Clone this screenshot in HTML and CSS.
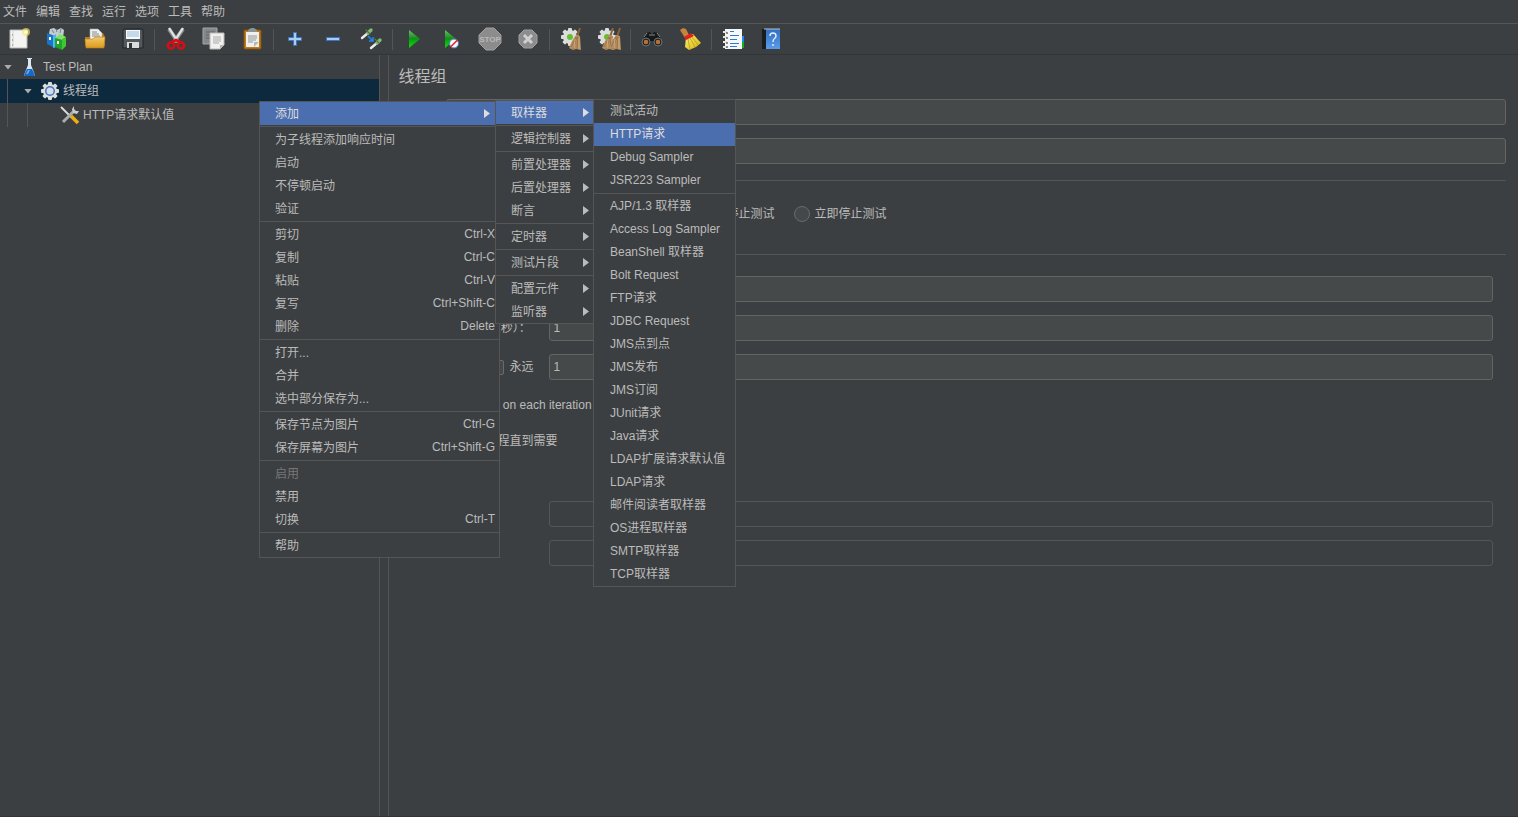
FILE: index.html
```
<!DOCTYPE html>
<html lang="zh-CN">
<head>
<meta charset="utf-8">
<title>Test Plan</title>
<link rel="stylesheet" href="styles.css">
</head>
<body>
<svg class="defs" aria-hidden="true">
  <defs>
    <linearGradient id="green" x1="0" y1="0" x2="0" y2="1"><stop offset="0" stop-color="#6fbf68"/><stop offset=".5" stop-color="#0f8a18"/><stop offset=".55" stop-color="#05a80c"/><stop offset="1" stop-color="#0fd813"/></linearGradient>
    <linearGradient id="folder" x1="0" y1="0" x2="0" y2="1"><stop offset="0" stop-color="#f3ca68"/><stop offset="1" stop-color="#d99a1c"/></linearGradient>
    <linearGradient id="book" x1="0" y1="0" x2="0" y2="1"><stop offset="0" stop-color="#2f6fc4"/><stop offset="1" stop-color="#5b9bea"/></linearGradient>
    <linearGradient id="broom" x1="0" y1="0" x2="1" y2="1"><stop offset="0" stop-color="#fff27a"/><stop offset="1" stop-color="#d3b00a"/></linearGradient>
    <g id="gear"><g fill="#dcdedc"><circle cx="9" cy="10" r="7"/><g id="teeth"><rect x="7" y="1" width="4" height="18" rx="1"/><rect x="0" y="8" width="18" height="4" rx="1"/></g><use href="#teeth" transform="rotate(45 9 10)"/></g></g>
    <g id="besom"><path d="M21 1l-3 9" stroke="#8a6239" stroke-width="2"/><path d="M17 8l4 1 1 14-5-1-3 1-4-2 3-7z" fill="#b58d60"/><path d="M18 10l-4 12M19 10l-1 12M17 10l-5 10" stroke="#8d6841" stroke-width=".7"/><path d="M20 11v11M16 12l-1 9" stroke="#dfbd8b" stroke-width=".7"/></g>
  </defs>
</svg>

<nav class="menubar" aria-label="主菜单">
  <button>文件</button><button>编辑</button><button>查找</button><button>运行</button><button>选项</button><button>工具</button><button>帮助</button>
</nav>

<div class="toolbar" role="toolbar">
  <button aria-label="新建"><svg viewBox="0 0 24 24"><path d="M3 3h17v18H3z" fill="#f4f4f2" stroke="#b7b7b2"/><path d="M6 4v16" stroke="#d4d4d4"/><path d="M5 8h1M5 13h1M5 18h1" stroke="#777"/><circle cx="19" cy="5" r="4" fill="#f7e96c" opacity=".65"/><circle cx="19" cy="5" r="2" fill="#fffcc4"/></svg></button>
  <button aria-label="模板"><svg viewBox="0 0 24 24"><path d="M4 6l1-4 4-1 3 2 4-2 3 2-1 8H6z" fill="#c3ccd0"/><path d="M7 3l2 3M11 2l1 3M16 2l-1 4" stroke="#768087"/><path d="M2 6l8 3v12l-8-4z" fill="#1676c9"/><path d="M8 9l3-2v13l-3 1z" fill="#50b5ea"/><path d="M10 11l7 2v10l-7-3z" fill="#1fa42c"/><path d="M10 11l5-4 6 3-4 3z" fill="#79e463"/><path d="M17 13l4-3v9l-4 4z" fill="#3fc82f"/><path d="M5 10v3M13 14v3" stroke="#fff" stroke-width="2"/></svg></button>
  <button aria-label="打开"><svg viewBox="0 0 24 24"><path d="M2 10h5l2-4h11l2 4v9H2z" fill="#b87b16"/><path d="M7 2h8l4 4v8H7z" fill="#f1f1ef" stroke="#aaa" stroke-width=".6"/><path d="M9 5h5M9 7h7M9 9h8" stroke="#888"/><path d="M2 12h8l2-2h10l-1 11H3z" fill="url(#folder)" stroke="#b27b1e" stroke-width=".6"/></svg></button>
  <button aria-label="保存"><svg viewBox="0 0 24 24"><path d="M3 2h18l1 1v18H2V3z" fill="#53585b" stroke="#202325"/><path d="M5 3h14v9H5z" fill="#f5f9fc"/><path d="M6 5h12M6 7h12M6 9h12" stroke="#95bbd4"/><path d="M6 15h12v6H6z" fill="#d9dcdc"/><path d="M8 16h3v5H8z" fill="#303435"/></svg></button>
  <span class="bar"></span>
  <button aria-label="剪切"><svg viewBox="0 0 24 24"><path d="M5 2l9 13M19 2l-9 13" stroke="#85898a" stroke-width="4"/><path d="M5 1l9 14M19 1l-9 14" stroke="#e3e6e6" stroke-width="2.3"/><g fill="none" stroke="#d90c13" stroke-width="2.6"><ellipse cx="7" cy="18.500" rx="3.200" ry="3"/><ellipse cx="17" cy="18.500" rx="3.200" ry="3"/><path d="M8 15l4-2 4 2"/></g></svg></button>
  <button aria-label="复制"><svg viewBox="0 0 24 24"><path d="M1 1h14v16H1z" fill="#85888a" stroke="#a4a6a7"/><path d="M4 5h9M4 8h9M4 11h9" stroke="#606466"/><path d="M8 6h14v12l-4 4H8z" fill="#f0f0ee" stroke="#b9b9b5"/><path d="M11 10h8M11 12h8M11 14h8M11 16h6" stroke="#aaa"/><path d="M18 22v-4h4z" fill="#b4b4b0"/></svg></button>
  <button aria-label="粘贴"><svg viewBox="0 0 24 24"><rect x="4" y="3" width="17" height="19" rx="1" fill="#c17a1a" stroke="#80500f"/><path d="M6 5h13v15H6z" fill="#efefed"/><path d="M8 5V3l3-2h3l3 2v2z" fill="#8d9293"/><path d="M8 9h9M8 11h9M8 13h8M8 15h5" stroke="#929799"/><path d="M19 15l-5 5v-5z" fill="#b5b8b8"/></svg></button>
  <span class="bar"></span>
  <button aria-label="展开"><svg viewBox="0 0 24 24"><path d="M10.500 5.500h3v5h5v3h-5v5h-3v-5h-5v-3h5z" fill="#a9cdf2" stroke="#3b76c0"/></svg></button>
  <button aria-label="折叠"><svg viewBox="0 0 24 24"><path d="M5.500 10.500h13v3h-13z" fill="#a9cdf2" stroke="#3b76c0"/></svg></button>
  <button aria-label="切换"><svg viewBox="0 0 24 24"><g stroke-linecap="round"><path d="M3 11l6-5M12 21l6-5" stroke="#ececeb" stroke-width="2.400"/><path d="M9 6l3-3M18 16l3-3" stroke="#86b875" stroke-width="3.400"/><path d="M7 3l4 4M16 12l4 4" stroke="#4f7a45" stroke-width="1.200"/></g><path d="M9 9l5 5M14 10v4h-4" fill="none" stroke="#2686ed" stroke-width="1.500"/></svg></button>
  <span class="bar"></span>
  <button aria-label="启动"><svg viewBox="0 0 24 24"><path d="M7 3l11 9-11 9z" fill="url(#green)"/></svg></button>
  <button aria-label="不停顿启动"><svg viewBox="0 0 24 24"><path d="M5 3l11 9-11 9z" fill="url(#green)"/><circle cx="14" cy="16.500" r="4.500" fill="#f5f7fb" stroke="#427dba"/><path d="M10.500 20l7-7" stroke="#e5222b" stroke-width="1.600"/></svg></button>
  <button disabled aria-label="停止"><svg viewBox="0 0 24 24"><path d="M8 1h8l7 7v8l-7 7H8l-7-7V8z" fill="#8c8c8c" stroke="#a0a0a0"/><text class="stop-word" x="12" y="15">STOP</text></svg></button>
  <button disabled aria-label="关闭"><svg viewBox="0 0 24 24"><path d="M8 3h8l5 5v8l-5 5H8l-5-5V8z" fill="#8c8c8c" stroke="#a0a0a0"/><path d="M8 8l8 8M16 8l-8 8" stroke="#d0d0d0" stroke-width="3"/></svg></button>
  <span class="bar"></span>
  <button aria-label="清除"><svg viewBox="0 0 24 24"><g transform="translate(2 0)"><use href="#gear"/><circle cx="9" cy="10" r="3" fill="#68bd31"/></g><use href="#besom"/></svg></button>
  <button aria-label="清除全部"><svg viewBox="0 0 24 24"><g transform="translate(1 0)"><use href="#gear"/><circle cx="9" cy="10" r="3" fill="#68bd31"/></g><use href="#besom" transform="translate(-5 0)"/><use href="#besom" transform="translate(2 0)"/></svg></button>
  <span class="bar"></span>
  <button aria-label="查找"><svg viewBox="0 0 24 24"><path d="M2 14L6 6l4-1 2 3 2-3 4 1 4 8-4 4-5-4h-2l-5 4z" fill="#17191b"/><path d="M4 10l3-4M20 10l-3-4M9 8h6" stroke="#848b8e"/><circle cx="6" cy="15" r="4" fill="#222" stroke="#6c7376"/><circle cx="18" cy="15" r="4" fill="#222" stroke="#6c7376"/><circle cx="6" cy="15" r="2.300" fill="#b77137"/><circle cx="18" cy="15" r="2.300" fill="#b77137"/></svg></button>
  <button aria-label="重置查找"><svg viewBox="0 0 24 24"><path d="M2 3l3-2 3 1 3 6-4 3z" fill="#c6843b"/><path d="M8 10l7-3 8 9-5 4-7 3-4-3z" fill="url(#broom)"/><path d="M10 12l2 10M12 11l5 9M14 10l6 8" stroke="#b99c10" stroke-width=".8"/><path d="M6 10l7-4 3 3-8 4z" fill="#dc211e"/></svg></button>
  <span class="bar"></span>
  <button aria-label="函数助手"><svg viewBox="0 0 24 24"><path d="M19 9h4v6h-4z" fill="#1690ed"/><path d="M19 15h4v6h-4z" fill="#18ad20"/><path d="M4 2h17v20H4z" fill="#f7f7f7"/><path d="M2 5h4M2 10h4M2 15h4M2 20h4" stroke="#e5e5e5" stroke-width="2"/><path d="M5 6h2M5 11h2M5 16h2M5 20h2" stroke="#222"/><path d="M9 4.500h4M9 8.500h9M9 12.500h7M9 16.500h9M9 19.500h7" stroke="#287bd1"/></svg></button>
  <button aria-label="帮助"><svg viewBox="0 0 24 24"><path d="M3 2h18v20H3z" fill="#1b1c1e"/><path d="M7 2h14v20H7z" fill="url(#book)"/><path d="M5 2h16" stroke="#b9c2cc"/><path d="M11 9q0-3 3-3t3 3q0 1.500-1.500 2.500T14 15M14 17v2" fill="none" stroke="#e8f0fb" stroke-width="1.400"/></svg></button>
</div>

<div class="workspace">
  <aside class="tree" role="tree">
    <div class="node" role="treeitem"><span class="twisty"></span><svg viewBox="0 0 20 20"><path d="M7 1h5v1h-1v6l4 10-1 1H5l-1-1L8 8V2H7z" fill="#dbe6f2"/><path d="M7 12h5l3 6-1 1H5l-1-1z" fill="#1769c7"/><path d="M8 13h2l-2 4H6z" fill="#64a8ef"/></svg><span>Test Plan</span></div>
    <div class="node selected" role="treeitem" aria-selected="true"><i class="guide"></i><span class="twisty"></span><svg viewBox="0 0 20 20"><use href="#gear" transform="translate(1 0)"/><circle cx="10" cy="10" r="5" fill="#4b77b8"/><circle cx="10" cy="10" r="3.500" fill="#cddcf0"/></svg><span>线程组</span></div>
    <div class="node" role="treeitem"><i class="guide"></i><i class="guide"></i><span class="twisty leaf"></span><svg viewBox="0 0 20 20"><path d="M1 2l10 10" stroke="#ddd" stroke-width="1.800"/><path d="M3 17L14 6" stroke="#a8adae" stroke-width="3"/><path d="M14 1l-2 3 1 4 4 1 2-3-3 0-2-2z" fill="#c6caca"/><path d="M11 11l7 7" stroke="#edae12" stroke-width="3.500"/></svg><span>HTTP请求默认值</span></div>
  </aside>
  <div class="splitter"></div>
  <main class="editor">
    <h1>线程组</h1>
    <div class="rows">
      <div class="row"><label class="short" for="name">名称：</label><input id="name" type="text"></div>
      <div class="row"><label class="short" for="comments">注释：</label><input id="comments" type="text"></div>
    </div>
    <h2>在取样器错误后要执行的动作</h2>
    <div class="radios">
      <label><input type="radio" name="onerror">继续</label>
      <label><input type="radio" name="onerror">启动下一进程循环</label>
      <label><input type="radio" name="onerror">停止线程</label>
      <label><input type="radio" name="onerror">停止测试</label>
      <label><input type="radio" name="onerror">立即停止测试</label>
    </div>
    <h2>线程属性</h2>
    <div class="rows group">
      <div class="row"><label class="long" for="threads">线程数：</label><input id="threads" type="text"></div>
      <div class="row"><label class="long" for="ramp">Ramp-Up时间（秒）：</label><input id="ramp" type="text" value="1"></div>
      <div class="row"><div class="long loop"><label for="loops">循环次数</label><label class="tick"><input type="checkbox">永远</label></div><input id="loops" type="text" value="1"></div>
      <label class="tick line wide"><input type="checkbox">Same user on each iteration</label>
      <label class="tick line"><input type="checkbox">延迟创建线程直到需要</label>
      <label class="tick line"><input type="checkbox">调度器</label>
      <div class="row off"><label class="long" for="duration">持续时间（秒）：</label><input id="duration" type="text" disabled></div>
      <div class="row off"><label class="long" for="delay">启动延迟（秒）：</label><input id="delay" type="text" disabled></div>
    </div>
  </main>
</div>

<div class="menu context" role="menu">
  <button class="active more">添加</button>
  <hr>
  <button>为子线程添加响应时间</button>
  <button>启动</button>
  <button>不停顿启动</button>
  <button>验证</button>
  <hr>
  <button>剪切<span>Ctrl-X</span></button>
  <button>复制<span>Ctrl-C</span></button>
  <button>粘贴<span>Ctrl-V</span></button>
  <button>复写<span>Ctrl+Shift-C</span></button>
  <button>删除<span>Delete</span></button>
  <hr>
  <button>打开...</button>
  <button>合并</button>
  <button>选中部分保存为...</button>
  <hr>
  <button>保存节点为图片<span>Ctrl-G</span></button>
  <button>保存屏幕为图片<span>Ctrl+Shift-G</span></button>
  <hr>
  <button disabled>启用</button>
  <button>禁用</button>
  <button>切换<span>Ctrl-T</span></button>
  <hr>
  <button>帮助</button>
</div>

<div class="menu categories" role="menu">
  <button class="active more">取样器</button>
  <hr>
  <button class="more">逻辑控制器</button>
  <hr>
  <button class="more">前置处理器</button>
  <button class="more">后置处理器</button>
  <button class="more">断言</button>
  <hr>
  <button class="more">定时器</button>
  <hr>
  <button class="more">测试片段</button>
  <hr>
  <button class="more">配置元件</button>
  <button class="more">监听器</button>
</div>

<div class="menu samplers" role="menu">
  <button>测试活动</button>
  <button class="active">HTTP请求</button>
  <button>Debug Sampler</button>
  <button>JSR223 Sampler</button>
  <hr>
  <button>AJP/1.3 取样器</button>
  <button>Access Log Sampler</button>
  <button>BeanShell 取样器</button>
  <button>Bolt Request</button>
  <button>FTP请求</button>
  <button>JDBC Request</button>
  <button>JMS点到点</button>
  <button>JMS发布</button>
  <button>JMS订阅</button>
  <button>JUnit请求</button>
  <button>Java请求</button>
  <button>LDAP扩展请求默认值</button>
  <button>LDAP请求</button>
  <button>邮件阅读者取样器</button>
  <button>OS进程取样器</button>
  <button>SMTP取样器</button>
  <button>TCP取样器</button>
</div>
</body>
</html>
```
FILE: styles.css
```
* { box-sizing: border-box; }

body {
  margin: 0;
  min-height: 100vh;
  display: flex;
  flex-direction: column;
  background: #3c3f41;
  color: #bbbbbb;
  font: 12px/18px "Liberation Sans", "Noto Sans CJK SC", sans-serif;
  white-space: nowrap;
}

button, input { font: inherit; color: inherit; }
button { border: 0; background: none; padding: 0; text-align: left; }
svg { display: block; fill: none; flex: none; }
.defs { position: absolute; width: 0; height: 0; }

.menubar {
  display: flex;
  gap: 9px;
  height: 24px;
  padding: 1px 3px 0;
  border-bottom: 1px solid #555555;
}

.toolbar {
  display: flex;
  height: 31px;
  border-bottom: 1px solid #323537;
}
.toolbar button { width: 38px; display: grid; place-items: center; }
.toolbar svg { width: 24px; height: 24px; }
.bar { width: 1px; margin: 5px 2px 4px; background: #555555; }
.stop-word { font-size: 8px; font-weight: bold; fill: #b8b8b8; text-anchor: middle; }

.workspace { flex: 1; display: flex; border-bottom: 1px solid #323537; }
.tree { width: 25%; border-right: 1px solid #555555; }
.splitter { width: 9px; border-right: 1px solid #555555; }

.node { display: flex; align-items: center; height: 24px; }
.node svg { width: 20px; height: 20px; margin-right: 3px; }
.selected { background: #0d293e; }
.guide { align-self: stretch; width: 13px; margin-left: 7px; border-left: 1px solid #555555; }
.twisty { width: 20px; padding-left: 4px; }
.twisty::before {
  content: "";
  display: block;
  width: 8px;
  height: 5px;
  background: #adadad;
  clip-path: polygon(0 0, 100% 0, 50% 100%);
}
.leaf::before { visibility: hidden; }

.editor { flex: 1; min-width: 0; padding: 0 12px 0 10px; }
h1 { height: 44px; margin: 0; font-size: 16px; font-weight: 400; line-height: 44px; }
h2 {
  display: flex;
  align-items: center;
  gap: 4px;
  height: 19px;
  margin: 7px 0 12px;
  font-size: 12px;
  font-weight: 400;
}
h2::after { content: ""; flex: 1; height: 1px; background: #555555; }

.rows { display: grid; gap: 13px; }
.row { display: flex; align-items: center; height: 26px; }
.short { width: 47px; }
.long { width: 135px; }
.group { padding: 0 13px 0 15px; }
input[type="text"] {
  flex: 1;
  min-width: 0;
  height: 26px;
  padding: 0 4px;
  border: 1px solid #646464;
  border-radius: 3px;
  background: #45494a;
}
input[type="text"]:disabled { background: transparent; border-color: #555555; }
.off { color: #888888; }

.radios { display: flex; gap: 19px; height: 24px; margin-bottom: 19px; padding-left: 19px; }
.radios label { display: flex; align-items: center; gap: 5px; }
input[type="radio"], input[type="checkbox"] {
  appearance: none;
  width: 15px;
  height: 15px;
  margin: 0;
  border: 1px solid #6b6b6b;
  background: #43494a;
}
input[type="radio"] { width: 16px; height: 16px; border-radius: 50%; }
input[type="checkbox"] { border-radius: 2px; }
.tick { display: flex; align-items: center; gap: 5px; }
.line { height: 23px; padding-left: 4px; }
.wide { gap: 9px; }
.loop { display: flex; justify-content: space-between; padding-right: 15px; }

.menu {
  position: absolute;
  display: flex;
  flex-direction: column;
  border: 1px solid #555555;
  background: #3c3f41;
}
.menu button {
  display: flex;
  align-items: center;
  justify-content: space-between;
  height: 23px;
  padding: 0 4px 0 15px;
}
.menu button:disabled { color: #777777; }
.menu button span { padding-bottom: 2px; }
.menu hr { width: 100%; height: 1px; margin: 1px 0; border: 0; background: #555555; }
.menu .active { background: #4b6eaf; color: #dddddd; }
.more::after {
  content: "";
  width: 6px;
  height: 9px;
  background: #bbbbbb;
  clip-path: polygon(0 0, 100% 50%, 0 100%);
}
.active.more::after { background: #dddddd; }
.context { left: 259px; top: 101px; width: 241px; }
.context .more { padding-right: 9px; }
.categories { left: 495px; top: 100px; width: 99px; }
.samplers { left: 593px; top: 99px; width: 143px; }
.samplers button { padding: 0 0 1px 16px; }
```
